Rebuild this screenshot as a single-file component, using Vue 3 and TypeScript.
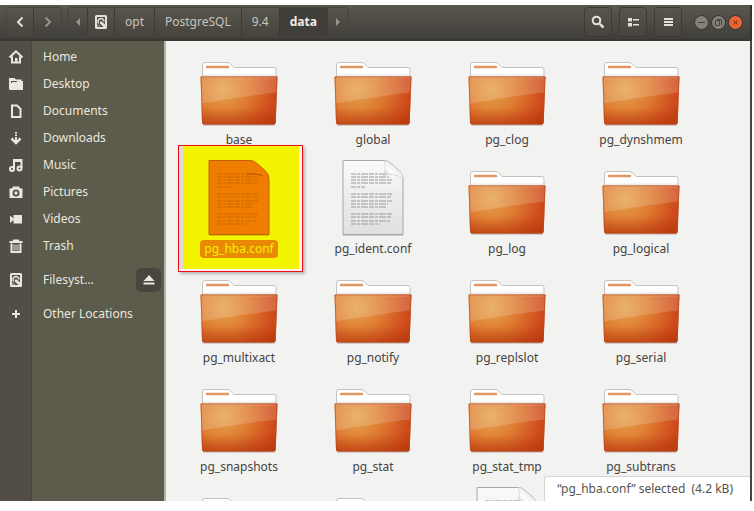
<script setup lang="ts">
interface Place {
  label: string
  icon: string
  spaced?: boolean
  eject?: boolean
}

interface Entry {
  name: string
  kind: 'folder' | 'file'
  selected?: boolean
}

const crumbs: string[] = ['opt', 'PostgreSQL', '9.4', 'data']

const places: Place[] = [
  { label: 'Home', icon: 'home' },
  { label: 'Desktop', icon: 'desktop' },
  { label: 'Documents', icon: 'documents' },
  { label: 'Downloads', icon: 'downloads' },
  { label: 'Music', icon: 'music' },
  { label: 'Pictures', icon: 'pictures' },
  { label: 'Videos', icon: 'videos' },
  { label: 'Trash', icon: 'trash' },
  { label: 'Filesyst…', icon: 'disk', spaced: true, eject: true },
  { label: 'Other Locations', icon: 'plus', spaced: true },
]

const entries: Entry[] = [
  { name: 'base', kind: 'folder' },
  { name: 'global', kind: 'folder' },
  { name: 'pg_clog', kind: 'folder' },
  { name: 'pg_dynshmem', kind: 'folder' },
  { name: 'pg_hba.conf', kind: 'file', selected: true },
  { name: 'pg_ident.conf', kind: 'file' },
  { name: 'pg_log', kind: 'folder' },
  { name: 'pg_logical', kind: 'folder' },
  { name: 'pg_multixact', kind: 'folder' },
  { name: 'pg_notify', kind: 'folder' },
  { name: 'pg_replslot', kind: 'folder' },
  { name: 'pg_serial', kind: 'folder' },
  { name: 'pg_snapshots', kind: 'folder' },
  { name: 'pg_stat', kind: 'folder' },
  { name: 'pg_stat_tmp', kind: 'folder' },
  { name: 'pg_subtrans', kind: 'folder' },
  { name: '', kind: 'folder' },
  { name: '', kind: 'folder' },
  { name: '', kind: 'file' },
]

// Text rows on a document page: [y, width]
const textRows: number[][] = [
  [14, 34], [17, 38], [20, 42], [23, 40], [27, 14],
  [34, 42], [37, 40], [41, 41], [44, 37], [47, 35],
  [54, 42], [57, 40], [61, 39], [64, 29],
]
</script>

<template>
  <div class="window">
    <svg class="defs" width="0" height="0" aria-hidden="true">
      <defs>
        <radialGradient id="front" gradientUnits="userSpaceOnUse" cx="24" cy="28" r="62">
          <stop offset="0" stop-color="#e6a450" />
          <stop offset="0.4" stop-color="#df7d32" />
          <stop offset="0.8" stop-color="#d04d1d" />
          <stop offset="1" stop-color="#c0400f" />
        </radialGradient>
        <linearGradient id="base-shade" x1="0" y1="0" x2="0" y2="1">
          <stop offset="0.65" stop-color="#b03408" stop-opacity="0" />
          <stop offset="1" stop-color="#b03408" stop-opacity="0.55" />
        </linearGradient>
        <linearGradient id="gloss" x1="0" y1="0" x2="0" y2="1">
          <stop offset="0" stop-color="#fff" stop-opacity="0.16" />
          <stop offset="1" stop-color="#fff" stop-opacity="0.17" />
        </linearGradient>
        <linearGradient id="tab" x1="0" y1="0" x2="0" y2="1">
          <stop offset="0.7" stop-color="#fff" />
          <stop offset="1" stop-color="#d5d5d2" />
        </linearGradient>
        <linearGradient id="paper" x1="0" y1="0" x2="0" y2="1">
          <stop offset="0" stop-color="#fafafa" />
          <stop offset="1" stop-color="#dfdfdf" />
        </linearGradient>
        <linearGradient id="curl" x1="0" y1="1" x2="1" y2="0">
          <stop offset="0" stop-color="#a9a9a9" />
          <stop offset="0.35" stop-color="#fff" />
          <stop offset="1" stop-color="#d2d2d2" />
        </linearGradient>
        <symbol id="icon-disk" viewBox="0 0 16 16">
          <path fill-rule="evenodd" d="M3.500 1h9A1.500 1.500 0 0 1 14 2.500v11a1.500 1.500 0 0 1-1.500 1.500h-9A1.500 1.500 0 0 1 2 13.500v-11A1.500 1.500 0 0 1 3.500 1zM4 3v10h8V3z" />
          <path fill="none" stroke="currentColor" stroke-width="1.500" d="M5.700 9.500A3 3 0 1 1 11 7.500" />
          <path d="M7 7.500h2L12.500 11v2h-2L7 9.500z" />
          <path d="M4 10.500h3V13H4z" opacity="0.35" />
        </symbol>
      </defs>
    </svg>

    <header class="toolbar">
      <div class="group">
        <button class="tool" aria-label="Back">
          <svg width="16" height="16" viewBox="0 0 16 16"><path class="line" d="M10.500 3.500 6 8l4.500 4.500" /></svg>
        </button>
        <button class="tool faint" aria-label="Forward">
          <svg width="16" height="16" viewBox="0 0 16 16"><path class="line" d="M5.500 3.500 10 8l-4.500 4.500" /></svg>
        </button>
      </div>

      <nav class="group path" aria-label="Path">
        <button class="tool narrow faint" aria-label="Scroll left">
          <svg width="10" height="10" viewBox="0 0 10 10"><path d="M7 1v8L3 5z" /></svg>
        </button>
        <button class="tool" aria-label="Root">
          <svg width="16" height="16"><use href="#icon-disk" /></svg>
        </button>
        <button v-for="c in crumbs" :key="c" class="tool crumb" :class="{ current: c === 'data' }">{{ c }}</button>
        <button class="tool narrow faint" aria-label="Scroll right">
          <svg width="10" height="10" viewBox="0 0 10 10"><path d="M3 1v8l4-4z" /></svg>
        </button>
      </nav>

      <div class="actions">
        <button class="tool boxed" aria-label="Search">
          <svg width="16" height="16" viewBox="0 0 16 16"><circle class="line" cx="6.500" cy="6.500" r="3.800" /><path class="line thick" d="m9.800 9.800 3.700 3.700" /></svg>
        </button>
        <button class="tool boxed" aria-label="View">
          <svg width="16" height="16" viewBox="0 0 16 16"><path d="M3 4h4v3.500H3zM3 9h4v3.500H3zM8 5h6v1.500H8zM8 10h6v1.500H8z" /></svg>
        </button>
        <button class="tool boxed" aria-label="Menu">
          <svg width="16" height="16" viewBox="0 0 16 16"><path d="M4 4h9v2H4zM4 7h9v2H4zM4 10h9v2H4z" /></svg>
        </button>
      </div>

      <div class="controls">
        <button class="control" aria-label="Minimize">
          <svg width="13" height="13" viewBox="0 0 13 13"><path d="M3 6.500h7" /></svg>
        </button>
        <button class="control" aria-label="Maximize">
          <svg width="13" height="13" viewBox="0 0 13 13"><path d="M3.500 4.500h4v5h-4zM5 3.500h4.500v6" /></svg>
        </button>
        <button class="control close" aria-label="Close">
          <svg width="13" height="13" viewBox="0 0 13 13"><path d="m4.500 4.500 4 4m0-4-4 4" /></svg>
        </button>
      </div>
    </header>

    <div class="body">
      <aside class="sidebar">
        <div v-for="p in places" :key="p.label" class="place" :class="{ spaced: p.spaced }">
          <a class="place-link" href="#">
            <svg class="place-icon" width="16" height="16" viewBox="0 0 16 16">
              <template v-if="p.icon === 'home'">
                <path class="line" d="M1.500 8.500 8 2.300l6.500 6.200M4 7.500v6h8v-6" />
                <path d="M7 9h2.500v5H7z" />
              </template>
              <template v-else-if="p.icon === 'desktop'">
                <path d="M1 2h5.500L8 3.500h5.500V5H3v8.500H1z" />
                <path d="M4 6h4.500L9.500 5H15v9H2V7h2z" />
              </template>
              <path v-else-if="p.icon === 'documents'" class="line" d="M4 2.500h5L12.500 6v8H4z" />
              <template v-else-if="p.icon === 'downloads'">
                <path class="line thick" d="m3.500 8.500 4.500 4.500 4.500-4.500" />
                <path d="M7 2h2v1.500H7zM7 4.500h2V6H7zM7 7h2v5H7z" />
              </template>
              <template v-else-if="p.icon === 'music'">
                <path class="line" d="M6 11.500V3h7.500v8M6 4h7.500" />
                <circle class="line" cx="4" cy="12" r="2" />
                <circle class="line" cx="11.500" cy="11.500" r="2" />
              </template>
              <path v-else-if="p.icon === 'pictures'" fill-rule="evenodd" d="M5 2.500h6L12 4.500h2.500v9.500h-13V4.500H4zM8 5.500a3.500 3.500 0 1 0 0 7 3.500 3.500 0 0 0 0-7zM8 7.300a1.700 1.700 0 1 1 0 3.400 1.700 1.700 0 0 1 0-3.400z" />
              <path v-else-if="p.icon === 'videos'" d="M5.500 4H14v8.500H5.500V9L2 12V4.500l3.500 3z" />
              <template v-else-if="p.icon === 'trash'">
                <path d="M5 1.500h6V3h3.500v2h-13V3H5z" />
                <path class="line" d="M3.500 5.500V14h9V5.500" />
                <path d="M5.500 6.500h1v6h-1zM7.500 6.500h1v6h-1zM9.500 6.500h1v6h-1z" />
              </template>
              <use v-else-if="p.icon === 'disk'" href="#icon-disk" />
              <path v-else d="M7 4h2v3h3v2H9v3H7V9H4V7h3z" />
            </svg>
            <span class="place-label">{{ p.label }}</span>
          </a>
          <button v-if="p.eject" class="eject" aria-label="Eject">
            <svg width="12" height="10" viewBox="0 0 12 10"><path d="m6 0 5.500 6H.5zM.5 7.500h11v2H.5z" /></svg>
          </button>
        </div>
      </aside>

      <main class="files">
        <div v-for="(e, i) in entries" :key="i" class="entry" :class="{ selected: e.selected }">
          <svg v-if="e.kind === 'folder'" class="thumb" width="80" height="66" viewBox="0 0 80 66">
            <path d="M4 62.500h72v2.500H4z" fill="#000" opacity="0.14" />
            <path d="M3.500 17V4q0-2.500 2.500-2.500h22q2 0 3.500 1.500l3.500 3.500h40q2 0 2 2V17z" fill="url(#tab)" stroke="#c2c2be" />
            <path v-if="e.name" d="M8 6h21" stroke="#e29663" stroke-width="2.500" stroke-linecap="round" />
            <path d="M1.500 15.500h77l-1.800 46q0 2-2 2H5q-2 0-2-2z" fill="url(#front)" />
            <path d="M1.500 15.500h77l-1.800 46q0 2-2 2H5q-2 0-2-2z" fill="url(#base-shade)" />
            <path d="M2 16h76l-.6 15.500Q50 34.500 2.700 42.500z" fill="url(#gloss)" />
            <path d="M2 16h76l-1.800 45q0 2-2 2H5.500q-2 0-2-2z" fill="none" stroke="#b84c23" stroke-opacity="0.65" />
            <path d="M3 17h74" stroke="#f2b391" stroke-opacity="0.4" />
          </svg>
          <svg v-else class="thumb page" width="64" height="76" viewBox="0 0 64 76">
            <path class="shadow" d="M2 74h60v2H2z" />
            <path class="sheet" d="M2 .5h41q4 0 7 3l8 7q4 4 4 8v56H2z" />
            <g class="rows">
              <path v-for="r in textRows" :key="r[0]" :d="`M10 ${r[0]}h${r[1]}`" />
            </g>
            <path v-if="e.selected" class="crease" d="M40 14q9-1 15 1.500" />
            <path v-else class="fold" d="M43 .5q3 8-.5 15 9-3 19.500 2.500 0-4-4-7.500l-8-7q-3-3-7-3z" />
          </svg>
          <span class="name">{{ e.name }}</span>
        </div>
        <output class="status">“pg_hba.conf” selected&nbsp; (4.2 kB)</output>
      </main>
    </div>
  </div>
</template>

<style>
body {
  background: #fff;
}
</style>

<style scoped>
.window {
  box-sizing: border-box;
  display: flex;
  flex-direction: column;
  height: 100vh;
  padding: 5px 2px 10px 0;
  font-family: "Noto Sans", "Open Sans", sans-serif;
  font-size: 12px;
  line-height: 18px;
}

.defs {
  position: absolute;
}

button {
  margin: 0;
  padding: 0;
  border: 0;
  background: none;
  color: inherit;
  font: inherit;
}

svg {
  display: block;
  flex: none;
  fill: currentColor;
}

.line {
  fill: none;
  stroke: currentColor;
  stroke-width: 2;
}

.thick {
  stroke-width: 2.5;
}

.toolbar {
  box-sizing: border-box;
  display: flex;
  align-items: center;
  flex: none;
  height: 36px;
  padding: 0 8px 0 6px;
  border-right: 2px solid #35332f;
  border-bottom: 2px solid #393732;
  background: linear-gradient(#59574e, #403e39);
  color: #e4e0d8;
}

.group {
  display: flex;
  box-sizing: border-box;
  height: 30px;
  border: 1px solid #45433c;
  border-radius: 4px;
}

.path {
  margin-left: 5px;
}

.tool {
  box-sizing: border-box;
  display: flex;
  align-items: center;
  justify-content: center;
  width: 27px;
  border-right: 1px solid #3d3b35;
  background: linear-gradient(#57554c, #46443e);
}

.tool:last-child {
  border-right: 0;
}

.tool.faint {
  background: none;
  color: #98958b;
}

.tool.narrow {
  width: 20px;
}

.crumb {
  width: auto;
  padding: 0 10px;
  color: #c9c5bc;
}

.current {
  background: #403e38;
  color: #f0ede6;
  font-weight: bold;
}

.actions {
  display: flex;
  gap: 7px;
  margin-left: auto;
}

.boxed,
.boxed:last-child {
  width: 28px;
  height: 30px;
  border: 1px solid #3c3a35;
  border-radius: 4px;
}

.controls {
  display: flex;
  gap: 4px;
  margin-left: 13px;
}

.control {
  width: 13px;
  height: 13px;
  border-radius: 50%;
  background: #85827a;
  box-shadow: 0 0 0 1px #3c3a35;
  color: #45433d;
}

.control path {
  fill: none;
  stroke: currentColor;
}

.close {
  background: #ee6336;
  color: #5b2110;
}

.body {
  display: flex;
  flex: 1;
  min-height: 0;
}

.sidebar {
  box-sizing: border-box;
  flex: none;
  width: 166px;
  padding-top: 2px;
  border-right: 2px solid #b5b3a8;
  background: linear-gradient(to right, #524e47 31px, #48463e 31px, #48463e 32px, #5d5c4c 32px);
  color: #e9e7df;
}

.place {
  display: flex;
  align-items: center;
  height: 27px;
  padding-right: 3px;
}

.spaced {
  margin-top: 7px;
}

.place-link {
  display: flex;
  align-items: center;
  flex: 1;
  gap: 19px;
  padding-left: 8px;
  color: inherit;
  text-decoration: none;
}

.eject {
  display: flex;
  align-items: center;
  justify-content: center;
  width: 25px;
  height: 24px;
  border-radius: 5px;
  background: #49463f;
}

.files {
  position: relative;
  display: grid;
  flex: 1;
  grid-template-columns: repeat(auto-fill, 134px);
  grid-auto-rows: 109px;
  align-content: start;
  overflow: hidden;
  padding: 10px 0 0 6px;
  border-right: 2px solid #454545;
  background: #f2f2f1;
  color: #45433f;
}

.entry {
  position: relative;
  display: flex;
  flex-direction: column;
  align-items: center;
}

.thumb {
  margin-top: 10px;
}

.page {
  margin-top: 0;
}

.name {
  margin-top: 4px;
  padding: 0 4px;
  border-radius: 4px;
}

.shadow {
  fill: #000;
  opacity: 0.15;
}

.sheet {
  fill: url(#paper);
  stroke: #a6a6a6;
}

.rows {
  stroke: #9a9a9a;
  stroke-dasharray: 5 1 3 1 7 1;
}

.fold {
  fill: url(#curl);
  stroke: #bcbcbc;
  stroke-width: 0.5;
}

.crease {
  fill: none;
  stroke: #b04e00;
}

/* Marked area around the selected file */
.selected::before {
  content: "";
  position: absolute;
  top: -15px;
  left: 6px;
  box-sizing: border-box;
  width: 125px;
  height: 127px;
  border: 1px solid #f00c0c;
  background: linear-gradient(to right, #dcdcdc 4px, #f4f400 4px, #f4f400 120px, #f4f4f4 120px);
  box-shadow: 2px 2px 3px rgba(0, 0, 0, 0.25), inset 0 -2px #f4f4f4;
}

.selected .thumb,
.selected .name {
  z-index: 1;
}

.selected .name {
  background: #e98a05;
  color: #f4ee00;
}

.selected .sheet {
  fill: #ee7d00;
  stroke: #c85f00;
}

.selected .rows {
  stroke: #cc6900;
}

.status {
  position: absolute;
  right: 0;
  bottom: 0;
  z-index: 2;
  padding: 3px 17px 3px 12px;
  border: 1px solid #d6d6d4;
  border-width: 1px 0 0 1px;
  border-radius: 3px 0 0 0;
  background: #fff;
  color: #55534f;
}
</style>
